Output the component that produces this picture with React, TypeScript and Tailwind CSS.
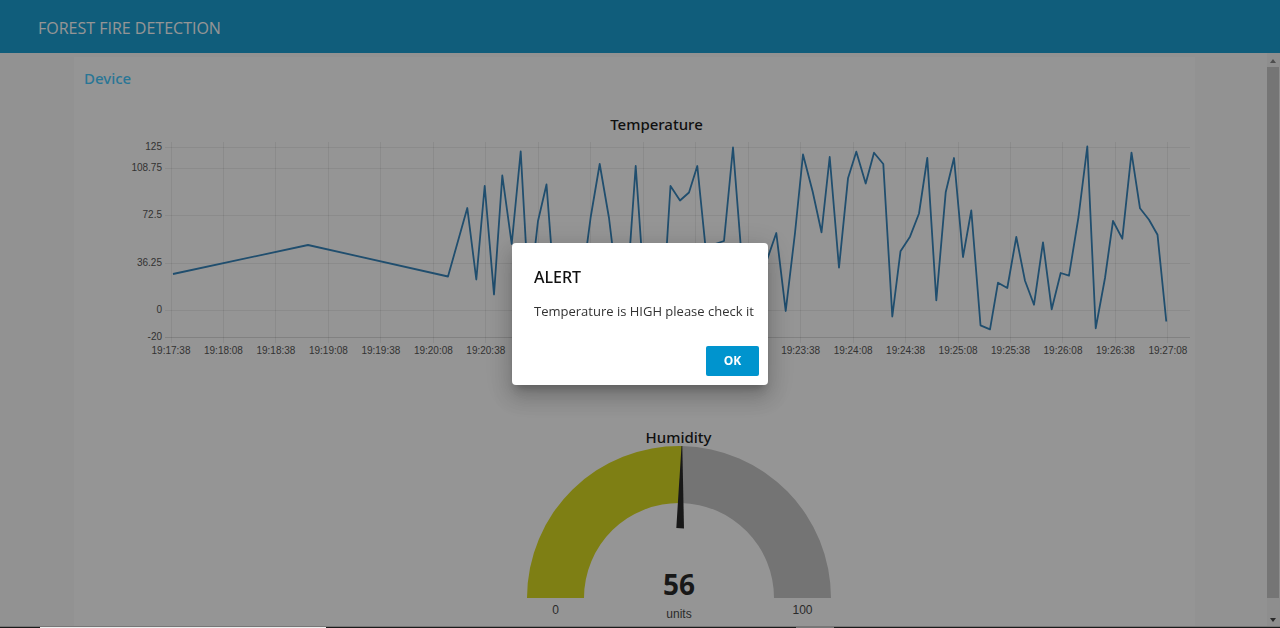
const timeLabels = [
  { label: '19:17:38', slot: 0 },
  { label: '19:18:08', slot: 1 },
  { label: '19:18:38', slot: 2 },
  { label: '19:19:08', slot: 3 },
  { label: '19:19:38', slot: 4 },
  { label: '19:20:08', slot: 5 },
  { label: '19:20:38', slot: 6 },
  { label: '19:23:38', slot: 12 },
  { label: '19:24:08', slot: 13 },
  { label: '19:24:38', slot: 14 },
  { label: '19:25:08', slot: 15 },
  { label: '19:25:38', slot: 16 },
  { label: '19:26:08', slot: 17 },
  { label: '19:26:38', slot: 18 },
  { label: '19:27:08', slot: 19 },
];

const slots = Array.from({ length: 20 }, (_, i) => i);
const slotX = (slot: number) => 171 + slot * 52.47;

const ticks = [
  { label: '125', y: 147 },
  { label: '108.75', y: 168 },
  { label: '72.5', y: 215 },
  { label: '36.25', y: 263 },
  { label: '0', y: 310 },
  { label: '-20', y: 337 },
];

const line =
  '173,274 308,245 448,276.5 467.3,208 476.3,279.5 484.7,186 494,294.5 502.3,175.5 511.7,244 520.7,151.5 529,300 538,221 546.5,184.5 555,296 572,318 581,290 590.7,217 599.7,164 609,218 618,292 627,290 635.7,166 645,300 662,322 670.5,186 680,200.5 689,192.5 697.3,166 706,252 715,244 724,241 733,147.5 742,262 759,282 768,257 776.3,233 785.7,311 795,233 803,154.5 812.7,191.7 821.5,232.3 829.7,157 839,267.7 848,178.3 856.3,151.7 865.7,183.5 874,152.7 883.3,164 892.3,316.5 900.5,251.3 910,236.7 919,213.5 927.3,158 936.3,300.3 945.7,192.3 954,158 963,257 971.3,210.5 980.5,325.3 990,329.3 998,282.7 1007.3,288 1016.3,237 1025,280.7 1034,304.7 1043,242.3 1051.7,309.3 1060.7,273 1069,275.7 1078.5,217 1087.3,146.5 1095.7,328.3 1105,278 1113,221 1122.3,238.7 1131.5,152.7 1140,208.3 1149,219.7 1157.5,234.7 1166.3,321.5';

function TemperatureChart() {
  return (
    <section aria-label="Temperature" className="pt-5">
      <h3 className="pl-11 text-center font-['Noto_Sans',sans-serif] text-[15px] leading-5 font-medium text-black">
        Temperature
      </h3>
      <svg viewBox="74 134 1121 225" className="block w-full" role="img" aria-label="Temperature over time">
        <g stroke="#000" strokeOpacity="0.08" shapeRendering="crispEdges">
          {ticks.map((t) => (
            <line key={t.label} x1="165" x2="1190" y1={t.y + 0.5} y2={t.y + 0.5} />
          ))}
          {slots.map((s) => (
            <line key={s} x1={slotX(s)} x2={slotX(s)} y1="142" y2="343" />
          ))}
          <line x1="165" x2="1190" y1="337.5" y2="337.5" />
        </g>
        <polyline points={line} fill="none" stroke="#1f77b4" strokeWidth="1.8" strokeLinejoin="round" />
        <g fill="#444" fontFamily="'Liberation Sans', Arial, sans-serif" fontSize="10">
          {ticks.map((t) => (
            <text key={t.label} x="162" y={t.y + 3} textAnchor="end">
              {t.label}
            </text>
          ))}
          {timeLabels.map((t) => (
            <text key={t.label} x={slotX(t.slot)} y="354" textAnchor="middle">
              {t.label}
            </text>
          ))}
        </g>
      </svg>
    </section>
  );
}

function HumidityGauge() {
  return (
    <section aria-label="Humidity" className="flex flex-col items-center pt-17 pl-22">
      <h3 className="font-['Noto_Sans',sans-serif] text-[15px] leading-5 font-medium text-black">Humidity</h3>
      <svg viewBox="527 447 304 178" className="block w-76 overflow-visible" role="img" aria-label="56 units">
        <path d="M527 598 A152 152 0 0 1 682 446 L681 503 A95 95 0 0 0 584 598 Z" fill="#d4d508" />
        <path d="M682 446 A152 152 0 0 1 831 598 L774 598 A95 95 0 0 0 681 503 Z" fill="#c0c0c0" />
        <path d="M681.5 446 L682.3 446 L684 528.5 L676.3 528 Z" fill="#111" />
        <text x="679" y="595" textAnchor="middle" fontSize="28" fontWeight="700" fill="#111" fontFamily="'Open Sans', sans-serif">
          56
        </text>
        <g textAnchor="middle" fill="#333" fontSize="12" fontFamily="'Liberation Sans', Arial, sans-serif">
          <text x="679" y="618">units</text>
          <text x="555.5" y="614">0</text>
          <text x="802.5" y="614">100</text>
        </g>
      </svg>
    </section>
  );
}

function ScrollTrack() {
  return (
    <div aria-hidden="true" className="flex w-[13px] shrink-0 flex-col items-center bg-[#f1f1f1] pt-1.5 pr-px pb-1">
      <svg viewBox="0 0 6 4" className="h-1 w-1.5 shrink-0"><path d="M3 0 L6 4 H0 Z" fill="#777" /></svg>
      <div className="mt-1 mb-5 w-3 grow bg-[#c1c1c1]" />
      <svg viewBox="0 0 6 4" className="h-1 w-1.5 shrink-0"><path d="M0 0 H6 L3 4 Z" fill="#333" /></svg>
    </div>
  );
}

function AlertDialog() {
  return (
    <div className="fixed inset-0 z-10 flex items-center justify-center bg-[rgba(33,33,33,0.48)]">
      <div
        role="alertdialog"
        aria-modal="true"
        aria-labelledby="alert-title"
        aria-describedby="alert-text"
        className="w-64 rounded bg-white shadow-[0_7px_8px_-4px_rgba(0,0,0,0.2),0_13px_19px_2px_rgba(0,0,0,0.14),0_5px_24px_4px_rgba(0,0,0,0.12)]"
      >
        <div className="px-[22px] pt-[22px]">
          <h2 id="alert-title" className="font-['Noto_Sans',sans-serif] text-base leading-6 font-medium text-[#111]">
            ALERT
          </h2>
          <p id="alert-text" className="mt-3 text-[13px] leading-5 whitespace-nowrap text-[#333]">
            Temperature is HIGH please check it
          </p>
        </div>
        <div className="flex justify-end px-[9px] pt-[25px] pb-[9px]">
          <button type="button" className="h-[30px] w-[53px] rounded-xs bg-[#0094ce] text-xs font-bold text-white">
            OK
          </button>
        </div>
      </div>
    </div>
  );
}

export default function App() {
  return (
    <div className="flex h-screen flex-col overflow-hidden bg-[#fafafa] font-['Open_Sans','Noto_Sans',sans-serif]">
      <header className="flex h-[53px] shrink-0 items-center bg-[#0094ce] px-[38px] pt-0.5">
        <h1 className="text-base leading-6 text-white">FOREST FIRE DETECTION</h1>
      </header>
      <div className="flex min-h-0 grow">
        <main className="min-w-0 grow overflow-hidden pt-1 pl-0.5">
          <div className="mx-auto min-h-full max-w-[1121px] bg-white pt-[11px]">
            <h2 className="px-2.5 font-['Noto_Sans',sans-serif] text-[15px] leading-5 font-medium text-[#30c4ff]">
              Device
            </h2>
            <div className="pt-1.5">
              <TemperatureChart />
            </div>
            <HumidityGauge />
          </div>
        </main>
        <ScrollTrack />
      </div>
      <AlertDialog />
      <footer aria-hidden="true" className="relative z-20 flex h-0.5 shrink-0 border-t border-[#777] bg-[#1a1a1a]">
        <div className="ml-10 w-[286px] bg-[#eee]" />
        <div className="ml-[470px] w-[38px] bg-[#777]" />
      </footer>
    </div>
  );
}
